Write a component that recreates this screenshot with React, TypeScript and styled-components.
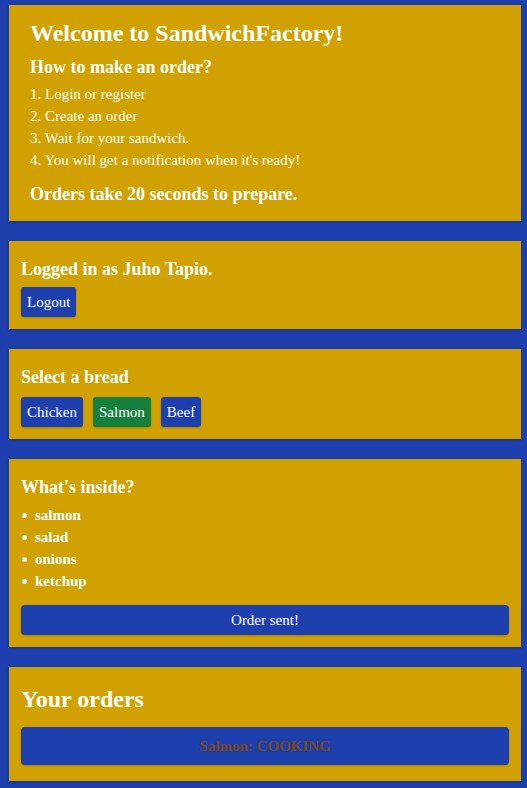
import React from "react";
import styled, { createGlobalStyle } from "styled-components";

const GlobalStyle = createGlobalStyle`
  html, body {
    margin: 0;
    padding: 0;
    background: #1e40af;
    min-height: 100%;
  }
  body {
    font-family: "Liberation Serif", "Times New Roman", serif;
    color: #ffffff;
  }
`;

const Page = styled.main`
  display: flex;
  flex-direction: column;
  gap: 20px;
  padding: 5px 6px 7px 9px;
`;

const Card = styled.section<{ $intro?: boolean }>`
  background: #d0a100;
  box-shadow: 0 1px 3px rgba(0, 0, 0, 0.25);
  padding: ${(p) => (p.$intro ? "14px 21px 16px" : "17px 12px 12px")};
  display: flex;
  flex-direction: column;
  align-items: flex-start;
`;

const Title = styled.h1<{ $mt?: number }>`
  margin: ${(p) => p.$mt ?? 0}px 0 0;
  font-size: 24px;
  line-height: 28px;
  font-weight: bold;
`;

const Heading = styled.h3<{ $mt?: number }>`
  margin: ${(p) => p.$mt ?? 0}px 0 0;
  font-size: 18px;
  line-height: 22px;
  font-weight: bold;
`;

const Steps = styled.ol`
  margin: 5px 0 0;
  padding: 0;
  list-style: none;
`;

const Step = styled.li`
  font-size: 15px;
  line-height: 22px;
`;

const Ingredients = styled.ul`
  margin: 6px 0 0;
  padding: 0;
  list-style: none;
`;

const Ingredient = styled.li`
  display: flex;
  align-items: center;
  font-size: 15px;
  line-height: 22px;
  font-weight: bold;
  &::before {
    content: "";
    width: 5px;
    height: 5px;
    border-radius: 50%;
    background: #ffffff;
    margin: 0 8px 0 1px;
  }
`;

const ButtonRow = styled.div<{ $mt?: number }>`
  display: flex;
  gap: 10px;
  margin-top: ${(p) => p.$mt ?? 7}px;
`;

const Button = styled.button<{ $active?: boolean }>`
  font-family: "Liberation Serif", "Times New Roman", serif;
  font-size: 15px;
  height: 30px;
  padding: 0 6px;
  border: none;
  border-radius: 3px;
  background: ${(p) => (p.$active ? "#15803d" : "#1e40af")};
  color: #ffffff;
  box-shadow: 0 1px 2px rgba(0, 0, 0, 0.2);
  cursor: pointer;
`;

const WideButton = styled.button`
  align-self: stretch;
  margin-top: 13px;
  font-family: "Liberation Serif", "Times New Roman", serif;
  font-size: 15px;
  height: 30px;
  border: none;
  border-radius: 4px;
  background: #1e40af;
  color: #ffffff;
  box-shadow: 0 1px 2px rgba(0, 0, 0, 0.2);
`;

const OrderStatus = styled.div`
  align-self: stretch;
  margin: 14px 0 4px;
  height: 38px;
  display: flex;
  align-items: center;
  justify-content: center;
  border-radius: 4px;
  background: #1e40af;
  box-shadow: 0 1px 2px rgba(0, 0, 0, 0.2);
  color: #7a4514;
  font-size: 15px;
  font-weight: bold;
`;

const steps = [
  "1. Login or register",
  "2. Create an order",
  "3. Wait for your sandwich.",
  "4. You will get a notification when it's ready!",
];

const breads = ["Chicken", "Salmon", "Beef"];
const fillings = ["salmon", "salad", "onions", "ketchup"];

export default function App() {
  return (
    <>
      <GlobalStyle />
      <Page>
        <Card $intro>
          <Title>Welcome to SandwichFactory!</Title>
          <Heading $mt={9}>How to make an order?</Heading>
          <Steps>
            {steps.map((s) => (
              <Step key={s}>{s}</Step>
            ))}
          </Steps>
          <Heading $mt={12}>Orders take 20 seconds to prepare.</Heading>
        </Card>

        <Card>
          <Heading>Logged in as Juho Tapio.</Heading>
          <ButtonRow>
            <Button>Logout</Button>
          </ButtonRow>
        </Card>

        <Card>
          <Heading>Select a bread</Heading>
          <ButtonRow $mt={9}>
            {breads.map((b) => (
              <Button key={b} $active={b === "Salmon"}>
                {b}
              </Button>
            ))}
          </ButtonRow>
        </Card>

        <Card>
          <Heading>What's inside?</Heading>
          <Ingredients>
            {fillings.map((f) => (
              <Ingredient key={f}>{f}</Ingredient>
            ))}
          </Ingredients>
          <WideButton>Order sent!</WideButton>
        </Card>

        <Card>
          <Title $mt={1}>Your orders</Title>
          <OrderStatus>Salmon: COOKING</OrderStatus>
        </Card>
      </Page>
    </>
  );
}
